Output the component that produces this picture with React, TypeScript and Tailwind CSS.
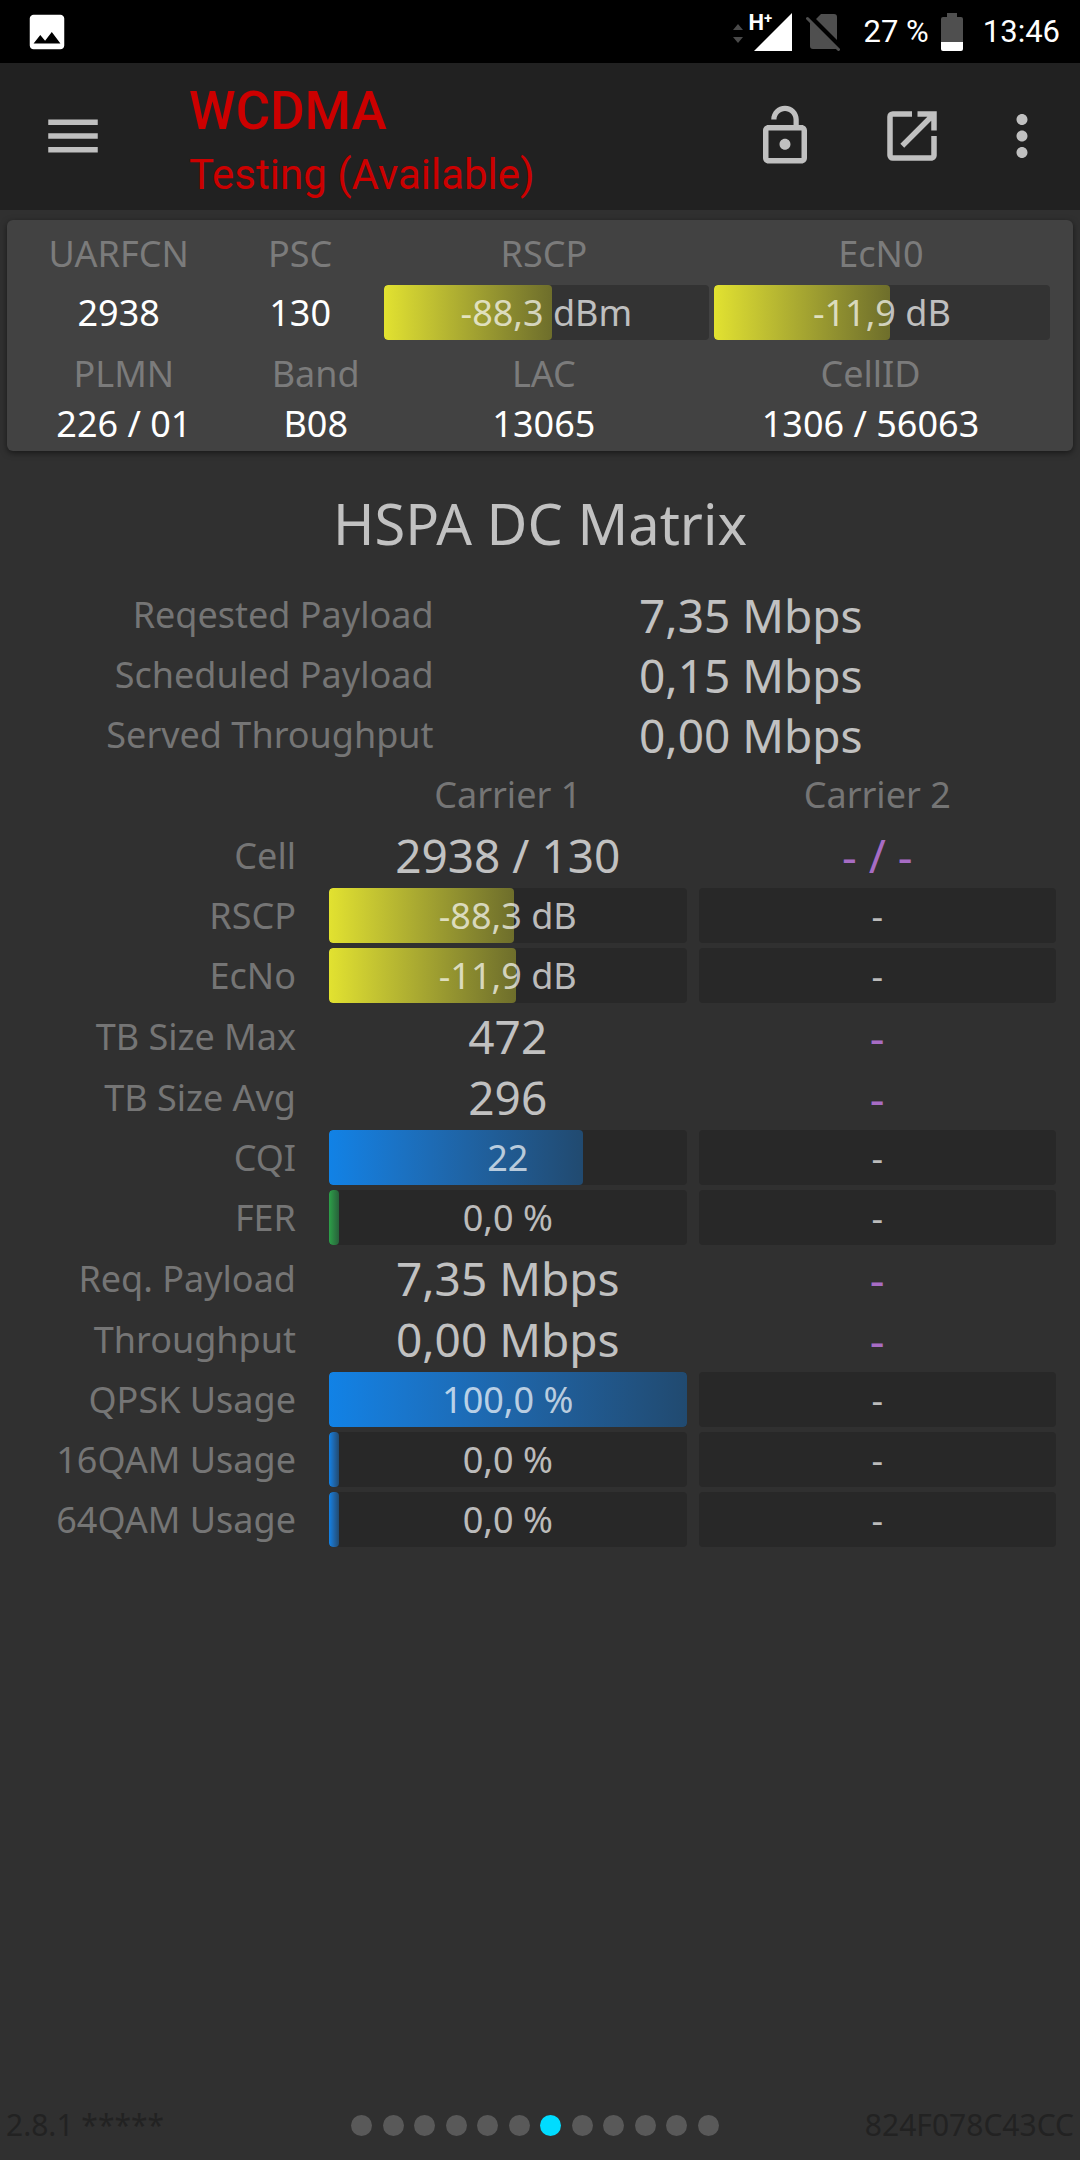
import type { ReactNode } from "react";
import clsx from "clsx";
import { MdImage, MdLockOpen, MdMenu, MdMoreVert, MdOpenInNew } from "react-icons/md";

type Tone = "yellow" | "blue" | "green";

type Reading = {
  text: string;
  // Fill of the bar in percent. Absent when the carrier has no value.
  fill?: number;
  tone?: Tone;
};

type Row = {
  label: string;
  kind: "text" | "bar";
  carrier1: Reading;
  carrier2: Reading;
};

const none: Reading = { text: "-" };

const totals = [
  { label: "Reqested Payload", value: "7,35 Mbps" },
  { label: "Scheduled Payload", value: "0,15 Mbps" },
  { label: "Served Throughput", value: "0,00 Mbps" },
];

const rows: Row[] = [
  { label: "Cell", kind: "text", carrier1: { text: "2938 / 130" }, carrier2: { text: "- / -" } },
  { label: "RSCP", kind: "bar", carrier1: { text: "-88,3 dB", fill: 51.7, tone: "yellow" }, carrier2: none },
  { label: "EcNo", kind: "bar", carrier1: { text: "-11,9 dB", fill: 52.3, tone: "yellow" }, carrier2: none },
  { label: "TB Size Max", kind: "text", carrier1: { text: "472" }, carrier2: none },
  { label: "TB Size Avg", kind: "text", carrier1: { text: "296" }, carrier2: none },
  { label: "CQI", kind: "bar", carrier1: { text: "22", fill: 71, tone: "blue" }, carrier2: none },
  { label: "FER", kind: "bar", carrier1: { text: "0,0 %", fill: 2.7, tone: "green" }, carrier2: none },
  { label: "Req. Payload", kind: "text", carrier1: { text: "7,35 Mbps" }, carrier2: none },
  { label: "Throughput", kind: "text", carrier1: { text: "0,00 Mbps" }, carrier2: none },
  { label: "QPSK Usage", kind: "bar", carrier1: { text: "100,0 %", fill: 100, tone: "blue" }, carrier2: none },
  { label: "16QAM Usage", kind: "bar", carrier1: { text: "0,0 %", fill: 2.7, tone: "blue" }, carrier2: none },
  { label: "64QAM Usage", kind: "bar", carrier1: { text: "0,0 %", fill: 2.7, tone: "blue" }, carrier2: none },
];

const PAGE_COUNT = 12;
const CURRENT_PAGE = 6;

const toneClass: Record<Tone, string> = {
  yellow: "from-[#e2e230] to-[#6e6e2b]",
  blue: "from-[#1182e6] to-[#214a70]",
  green: "from-[#2ca048] to-[#27603a]",
};

function Bar({ reading, className }: { reading: Reading; className: string }) {
  return (
    <div
      className={clsx(
        "relative flex h-[55px] items-center justify-center overflow-hidden rounded-sm",
        className,
      )}
    >
      {reading.fill !== undefined && reading.tone && (
        <div
          className={clsx("absolute inset-y-0 left-0 rounded-sm bg-linear-to-r", toneClass[reading.tone])}
          style={{ width: `${reading.fill}%` }}
        />
      )}
      <span className="relative text-white/70">{reading.text}</span>
    </div>
  );
}

function StatusBar() {
  return (
    <div className="flex h-[63px] items-center bg-black pr-5 pl-6 font-[Roboto,sans-serif] text-[31px] text-white">
      <MdImage className="size-[46px]" aria-hidden />
      <div className="relative ml-auto h-[38px] w-[60px]">
        <svg viewBox="0 0 60 38" className="size-full" aria-hidden>
          <path d="M1 17l5-6 5 6zM1 24h10l-5 6z" fill="#4a4a4a" />
          <path d="M60 0v38H22z" fill="#fff" />
        </svg>
        <span className="absolute top-0 left-[17px] flex items-start font-bold">
          <span className="text-[22px] leading-[20px]">H</span>
          <span className="text-[15px] leading-[10px]">+</span>
        </span>
      </div>
      <svg viewBox="0 0 34 38" className="ml-[14px] h-[38px] w-[34px]" aria-hidden>
        <path d="M15 1h13a3 3 0 0 1 3 3v23L10 6zM4 9l27 27H7a3 3 0 0 1-3-3z" fill="#4f4f4f" />
        <path d="M1.500 5.500l31 31" stroke="#4f4f4f" strokeWidth="3" strokeLinecap="round" />
      </svg>
      <span className="ml-6">27 %</span>
      <svg viewBox="0 0 22 38" className="ml-3 h-[38px] w-[22px]" aria-hidden>
        <path d="M6 0h10v4h4a2 2 0 0 1 2 2v23H0V6a2 2 0 0 1 2-2h4z" fill="#4f4f4f" />
        <path d="M0 29h22v7a2 2 0 0 1-2 2H2a2 2 0 0 1-2-2z" fill="#fff" />
      </svg>
      <span className="ml-5">13:46</span>
    </div>
  );
}

function IconButton({ label, className, children }: { label: string; className: string; children: ReactNode }) {
  return (
    <button
      type="button"
      aria-label={label}
      className={clsx("flex h-full items-center justify-center pb-[2px] text-[66px] text-[#c0c0c0]", className)}
    >
      {children}
    </button>
  );
}

function Toolbar() {
  return (
    <header className="flex h-[147px] items-center bg-[#212121] pr-3 font-[Roboto,sans-serif] text-[#cc0000]">
      <IconButton label="Open menu" className="w-[146px]">
        <MdMenu />
      </IconButton>
      <div className="ml-[43px] flex-1 pt-3">
        <h1 className="text-[53px] leading-[64px] font-medium">WCDMA</h1>
        <p className="text-[42px] leading-[64px]">Testing (Available)</p>
      </div>
      <IconButton label="Unlock" className="w-[126px]">
        <MdLockOpen />
      </IconButton>
      <IconButton label="Open in new window" className="w-[128px]">
        <MdOpenInNew />
      </IconButton>
      <IconButton label="More options" className="w-[92px]">
        <MdMoreVert />
      </IconButton>
    </header>
  );
}

function ServingCell() {
  return (
    <section className="mx-[7px] mt-[10px] rounded-md bg-[#424242] pt-[2px] pr-[21px] pb-[2px] pl-2 text-center text-white shadow-[0_2px_6px_rgba(0,0,0,0.5)]">
      <table className="w-full table-fixed">
        <thead className="text-[#7b7b7b]">
          <tr className="h-[63px]">
            <th className="w-[20%] font-normal">UARFCN</th>
            <th className="w-[15%] font-normal">PSC</th>
            <th className="w-[32%] font-normal">RSCP</th>
            <th className="w-[33%] font-normal">EcN0</th>
          </tr>
        </thead>
        <tbody>
          <tr className="h-[55px]">
            <td>2938</td>
            <td>130</td>
            <td className="pr-px pl-[6px]">
              <Bar reading={{ text: "-88,3 dBm", fill: 51.7, tone: "yellow" }} className="bg-[#333333]" />
            </td>
            <td className="pr-[2px] pl-1">
              <Bar reading={{ text: "-11,9 dB", fill: 52.3, tone: "yellow" }} className="bg-[#333333]" />
            </td>
          </tr>
        </tbody>
      </table>
      <table className="mt-[9px] w-full table-fixed">
        <thead className="text-[#7b7b7b]">
          <tr className="h-[50px]">
            <th className="w-[21%] font-normal">PLMN</th>
            <th className="w-[16%] font-normal">Band</th>
            <th className="w-[28%] font-normal">LAC</th>
            <th className="w-[35%] font-normal">CellID</th>
          </tr>
        </thead>
        <tbody>
          <tr className="h-[50px]">
            <td>226 / 01</td>
            <td>B08</td>
            <td>13065</td>
            <td>1306 / 56063</td>
          </tr>
        </tbody>
      </table>
    </section>
  );
}

function Totals() {
  return (
    <table className="w-full table-fixed">
      <tbody>
        {totals.map((total) => (
          <tr key={total.label} className="h-[60px]">
            <th scope="row" className="w-[40%] pr-[2px] text-right font-normal text-[#757575]">
              {total.label}
            </th>
            <td className="pl-1 text-center text-[46px]">{total.value}</td>
          </tr>
        ))}
      </tbody>
    </table>
  );
}

function CarrierCell({ kind, reading, muted }: { kind: Row["kind"]; reading: Reading; muted?: boolean }) {
  if (kind === "bar") {
    return (
      <td className="px-[6px] pt-[2px] pb-[3px]">
        <Bar reading={reading} className="bg-[#282828]" />
      </td>
    );
  }
  return <td className={clsx("pb-[2px] text-[46px]", muted && "text-[#a76cc4]")}>{reading.text}</td>;
}

function CarrierTable() {
  return (
    <table className="w-full table-fixed text-center">
      <thead className="text-[#757575]">
        <tr className="h-[60px]">
          <td className="w-[305px]" />
          <th scope="col" className="font-normal">
            Carrier 1
          </th>
          <th scope="col" className="font-normal">
            Carrier 2
          </th>
        </tr>
      </thead>
      <tbody>
        {rows.map((row) => (
          <tr key={row.label} className={row.kind === "bar" ? "h-[60px]" : "h-[61px]"}>
            <th scope="row" className="pr-[27px] text-right font-normal whitespace-nowrap text-[#757575]">
              {row.label}
            </th>
            <CarrierCell kind={row.kind} reading={row.carrier1} />
            <CarrierCell kind={row.kind} reading={row.carrier2} muted />
          </tr>
        ))}
      </tbody>
    </table>
  );
}

function Footer() {
  return (
    <footer className="grid h-[70px] grid-cols-[1fr_auto_1fr] items-center px-[6px] text-[30px] text-[#222222]">
      <span>2.8.1 *****</span>
      <ul className="mr-[10px] flex w-[368px] justify-between">
        {Array.from({ length: PAGE_COUNT }, (_, i) => (
          <li
            key={i}
            className={clsx("size-[21px] rounded-full", i === CURRENT_PAGE ? "bg-[#00dcff]" : "bg-[#595959]")}
          />
        ))}
      </ul>
      <span className="text-right">824F078C43CC</span>
    </footer>
  );
}

export default function App() {
  return (
    <div className="flex min-h-screen flex-col bg-[#303030] font-['Noto_Sans',sans-serif] text-[36px] leading-none text-[#c1c1c1]">
      <StatusBar />
      <Toolbar />
      <ServingCell />
      <main className="flex-1 px-[18px]">
        <h2 className="pt-10 pb-[30px] text-center text-[56px] leading-[64px]">HSPA DC Matrix</h2>
        <Totals />
        <CarrierTable />
      </main>
      <Footer />
    </div>
  );
}
